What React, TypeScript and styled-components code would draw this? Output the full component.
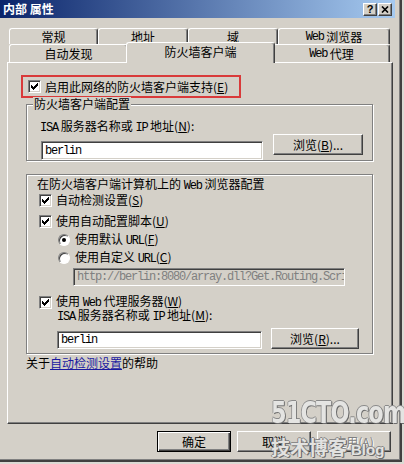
import styled, { createGlobalStyle, css } from 'styled-components'

const GlobalStyle = createGlobalStyle`
  html, body {
    margin: 0;
    padding: 0;
    background: #dcdad4;
  }
  body {
    font-family: "Noto Sans CJK SC", "Liberation Sans", sans-serif;
    font-size: 12px;
    color: #000;
  }
`

const FACE = '#d4d0c8'

const Screen = styled.div`
  width: 404px;
  height: 464px;
  position: relative;
  overflow: hidden;
`

const Window = styled.div`
  width: 402px;
  height: 462px;
  box-sizing: border-box;
  background: ${FACE};
  border-right: 2px solid #404040;
  border-bottom: 2px solid #404040;
  box-shadow: inset -1px -1px 0 #808080;
  display: flex;
  flex-direction: column;
`

const TitleBar = styled.div`
  width: 395px;
  height: 18px;
  flex-shrink: 0;
  display: flex;
  align-items: center;
  justify-content: space-between;
  padding-left: 3px;
  box-sizing: border-box;
  background: linear-gradient(to right, #0a246a, #a6caf0);
`

const TitleText = styled.span`
  color: #fff;
  font-weight: bold;
  font-size: 12px;
  line-height: 14px;
`

const CaptionButtons = styled.div`
  display: flex;
  gap: 1px;
  margin-right: 3px;
`

const CaptionButton = styled.div`
  width: 14px;
  height: 13px;
  box-sizing: border-box;
  background: ${FACE};
  border: 1px solid;
  border-color: #fff #404040 #404040 #fff;
  box-shadow: inset -1px -1px 0 #808080;
  display: flex;
  align-items: center;
  justify-content: center;
  font-family: "Liberation Sans", sans-serif;
  font-weight: bold;
  font-size: 11px;
  line-height: 11px;
`

const TabStrip = styled.div`
  margin-top: 10px;
  display: flex;
  flex-direction: column;
`

const TabRow = styled.div<{ $height: number }>`
  display: flex;
  height: ${(p) => p.$height}px;
  padding-left: 9px;
`

const Tab = styled.div<{ $width: number; $selected?: boolean }>`
  width: ${(p) => p.$width}px;
  box-sizing: border-box;
  display: flex;
  align-items: center;
  justify-content: center;
  background: ${FACE};
  border-top: 1px solid #fff;
  border-left: 1px solid #fff;
  border-right: 1px solid #404040;
  border-radius: 3px 3px 0 0;
  box-shadow: inset -1px 0 0 #808080;
  line-height: 14px;
  white-space: nowrap;
  ${(p) =>
    p.$selected &&
    css`
      position: relative;
      z-index: 1;
      margin: -2px -2px -1px;
      padding-bottom: 3px;
    `}
`

const Mono = styled.span`
  font-family: "Liberation Mono", monospace;
  font-size: 12px;
  letter-spacing: -1.2px;
`

const Key = styled.span`
  text-decoration: underline;
`

const Panel = styled.div`
  margin-left: 7px;
  width: 386px;
  height: 362px;
  box-sizing: border-box;
  border-top: 1px solid #fff;
  border-left: 1px solid #fff;
  border-right: 1px solid #404040;
  border-bottom: 1px solid #404040;
  box-shadow: inset -1px -1px 0 #808080;
  display: flex;
  flex-direction: column;
`

const Highlight = styled.div`
  margin: 12px 0 0 13px;
  width: 220px;
  height: 23px;
  box-sizing: border-box;
  border: 2px solid #d93a3a;
  display: flex;
  align-items: center;
  padding-left: 5px;
`

const Row = styled.div<{ $top?: number; $left?: number }>`
  display: flex;
  align-items: center;
  gap: 4px;
  height: 14px;
  line-height: 14px;
  white-space: nowrap;
  margin-top: ${(p) => p.$top ?? 0}px;
  margin-left: ${(p) => p.$left ?? 0}px;
`

const sunken = css`
  border: 1px solid;
  border-color: #808080 #fff #fff #808080;
  box-shadow: inset 1px 1px 0 #404040, inset -1px -1px 0 ${FACE};
`

const CheckBox = styled.span`
  width: 13px;
  height: 13px;
  box-sizing: border-box;
  flex-shrink: 0;
  background: #fff;
  ${sunken}
  display: flex;
  align-items: center;
  justify-content: center;
`

const Radio = styled.span<{ $on?: boolean }>`
  width: 12px;
  height: 12px;
  box-sizing: border-box;
  flex-shrink: 0;
  border-radius: 50%;
  background: #fff;
  border: 1px solid;
  border-color: #808080 #fff #fff #808080;
  box-shadow: inset 1px 1px 0 #404040;
  display: flex;
  align-items: center;
  justify-content: center;
  &::after {
    content: '';
    width: 4px;
    height: 4px;
    border-radius: 50%;
    background: ${(p) => (p.$on ? '#000' : 'transparent')};
  }
`

const Group = styled.div<{ $top: number; $height: number }>`
  margin: ${(p) => p.$top}px 0 0 18px;
  width: 347px;
  height: ${(p) => p.$height}px;
  box-sizing: border-box;
  border: 1px solid #808080;
  box-shadow: inset 1px 1px 0 #fff, 1px 1px 0 #fff;
  display: flex;
  flex-direction: column;
  padding-left: 12px;
`

const Legend = styled.span`
  align-self: flex-start;
  margin: -8px 0 0 -6px;
  padding: 0 1px;
  background: ${FACE};
  line-height: 14px;
`

const Caption = styled.div<{ $top?: number; $left?: number }>`
  line-height: 14px;
  white-space: nowrap;
  margin-top: ${(p) => p.$top ?? 0}px;
  margin-left: ${(p) => p.$left ?? 0}px;
`

const FieldRow = styled.div<{ $top: number; $left?: number }>`
  display: flex;
  align-items: flex-start;
  margin-top: ${(p) => p.$top}px;
  margin-left: ${(p) => p.$left ?? 0}px;
`

const TextInput = styled.div<{ $width: number; $height: number; $top?: number; $disabled?: boolean }>`
  width: ${(p) => p.$width}px;
  height: ${(p) => p.$height}px;
  margin-top: ${(p) => p.$top ?? 0}px;
  box-sizing: border-box;
  background: ${(p) => (p.$disabled ? FACE : '#fff')};
  color: ${(p) => (p.$disabled ? '#808080' : '#000')};
  ${sunken}
  padding-left: 3px;
  display: flex;
  align-items: center;
  overflow: hidden;
  white-space: nowrap;
  font-family: "Liberation Mono", monospace;
  font-size: 12px;
  letter-spacing: -1.2px;
`

const Button = styled.div<{ $width: number; $height?: number; $default?: boolean; $disabled?: boolean }>`
  width: ${(p) => p.$width}px;
  height: ${(p) => p.$height ?? 21}px;
  box-sizing: border-box;
  background: ${FACE};
  display: flex;
  align-items: center;
  justify-content: center;
  line-height: 14px;
  white-space: nowrap;
  color: ${(p) => (p.$disabled ? '#808080' : '#000')};
  text-shadow: ${(p) => (p.$disabled ? '1px 1px 0 #fff' : 'none')};
  ${(p) =>
    p.$default
      ? css`
          border: 1px solid #000;
          box-shadow: inset 1px 1px 0 #fff, inset -1px -1px 0 #404040, inset -2px -2px 0 #808080;
        `
      : css`
          border: 1px solid;
          border-color: #fff #404040 #404040 #fff;
          box-shadow: inset -1px -1px 0 #808080;
        `}
`

const HelpLine = styled.div`
  margin: 2px 0 0 18px;
  line-height: 14px;
`

const Link = styled.span`
  color: #1a1aa0;
  text-decoration: underline;
`

const Footer = styled.div`
  display: flex;
  gap: 6px;
  margin: 7px 0 0 157px;
`

const Watermark = styled.div`
  position: absolute;
  left: 271px;
  top: 398px;
  width: 128px;
  display: flex;
  flex-direction: column;
  pointer-events: none;
  color: rgba(238, 238, 236, 0.92);
  text-shadow: 1px 1px 0 #6e6e6e, -1px 0 0 #8a8a8a, 0 -1px 0 #8a8a8a, 1px 0 0 #7a7a7a;
`

const WatermarkBrand = styled.span`
  font-family: "DejaVu Sans Condensed", "DejaVu Sans", sans-serif;
  font-weight: bold;
  font-size: 30px;
  line-height: 30px;
  letter-spacing: -1px;
  white-space: nowrap;
  transform: scaleX(0.83);
  transform-origin: left center;
`

const WatermarkSub = styled.div`
  display: flex;
  align-items: baseline;
  gap: 4px;
  margin-top: 9px;
  line-height: 20px;
`

const WatermarkCjk = styled.span`
  font-weight: bold;
  font-size: 19px;
`

const WatermarkBlog = styled.span`
  font-family: "Liberation Sans", sans-serif;
  font-weight: bold;
  font-size: 15px;
`

const Check = () => (
  <svg width="7" height="7" viewBox="0 0 7 7" shapeRendering="crispEdges">
    <path d="M6 0h1v1h-1zM5 1h2v1h-2zM0 2h1v1h-1zM4 2h3v1h-3zM0 3h2v1h-2zM3 3h3v1h-3zM0 4h5v1h-5zM1 5h3v1h-3zM2 6h1v1h-1z" fill="#000" />
  </svg>
)

const CloseGlyph = () => (
  <svg width="8" height="7" viewBox="0 0 8 7">
    <path d="M1 0.5 L7 6.5 M7 0.5 L1 6.5" stroke="#000" strokeWidth="1.6" />
  </svg>
)

export default function App() {
  return (
    <Screen>
      <GlobalStyle />
      <Window>
        <TitleBar>
          <TitleText>内部 属性</TitleText>
          <CaptionButtons>
            <CaptionButton>?</CaptionButton>
            <CaptionButton>
              <CloseGlyph />
            </CaptionButton>
          </CaptionButtons>
        </TitleBar>

        <TabStrip>
          <TabRow $height={16}>
            <Tab $width={89}>常规</Tab>
            <Tab $width={90}>地址</Tab>
            <Tab $width={90}>域</Tab>
            <Tab $width={112}>
              <Mono>Web</Mono>&nbsp;浏览器
            </Tab>
          </TabRow>
          <TabRow $height={18}>
            <Tab $width={119}>自动发现</Tab>
            <Tab $width={149} $selected>防火墙客户端</Tab>
            <Tab $width={117}>
              <Mono>Web</Mono>&nbsp;代理
            </Tab>
          </TabRow>
        </TabStrip>

        <Panel>
          <Highlight>
            <Row>
              <CheckBox>
                <Check />
              </CheckBox>
              <span>
                启用此网络的防火墙客户端支持(<Key>E</Key>)
              </span>
            </Row>
          </Highlight>

          <Group $top={6} $height={57}>
            <Legend>防火墙客户端配置</Legend>
            <Caption $top={8} $left={1}>
              <Mono>ISA</Mono> 服务器名称或 <Mono>IP</Mono> 地址(<Key>N</Key>):
            </Caption>
            <FieldRow $top={-1} $left={2}>
              <TextInput $width={222} $height={19} $top={7}>
                berlin
              </TextInput>
              <Button $width={90} style={{ marginLeft: 10 }}>
                浏览(<Key>B</Key>)...
              </Button>
            </FieldRow>
          </Group>

          <Group $top={13} $height={180}>
            <Caption $top={2} $left={-2}>
              在防火墙客户端计算机上的 <Mono>Web</Mono> 浏览器配置
            </Caption>
            <Row>
              <CheckBox>
                <Check />
              </CheckBox>
              <span>
                自动检测设置(<Key>S</Key>)
              </span>
            </Row>
            <Row $top={7}>
              <CheckBox>
                <Check />
              </CheckBox>
              <span>
                使用自动配置脚本(<Key>U</Key>)
              </span>
            </Row>
            <Row $top={5} $left={19} style={{ gap: 5 }}>
              <Radio $on />
              <span>
                使用默认 <Mono>URL</Mono>(<Key>F</Key>)
              </span>
            </Row>
            <Row $top={4} $left={19} style={{ gap: 5 }}>
              <Radio />
              <span>
                使用自定义 <Mono>URL</Mono>(<Key>C</Key>)
              </span>
            </Row>
            <FieldRow $top={3} $left={34}>
              <TextInput $width={272} $height={18} $disabled>
                http://berlin:8080/array.dll?Get.Routing.Script
              </TextInput>
            </FieldRow>
            <Row $top={9}>
              <CheckBox>
                <Check />
              </CheckBox>
              <span>
                使用 <Mono>Web</Mono> 代理服务器(<Key>W</Key>)
              </span>
            </Row>
            <Caption $top={-1} $left={18}>
              <Mono>ISA</Mono> 服务器名称或 <Mono>IP</Mono> 地址(<Key>M</Key>):
            </Caption>
            <FieldRow $top={4} $left={18}>
              <TextInput $width={205} $height={18} $top={3}>
                berlin
              </TextInput>
              <Button $width={88} style={{ marginLeft: 9 }}>
                浏览(<Key>R</Key>)...
              </Button>
            </FieldRow>
          </Group>

          <HelpLine>
            关于<Link>自动检测设置</Link>的帮助
          </HelpLine>
        </Panel>

        <Footer>
          <Button $width={74} $default>
            确定
          </Button>
          <Button $width={74}>取消</Button>
          <Button $width={74} $disabled>
            应用(<Key>A</Key>)
          </Button>
        </Footer>
      </Window>

      <Watermark>
        <WatermarkBrand>51CTO.com</WatermarkBrand>
        <WatermarkSub>
          <WatermarkCjk>技术博客</WatermarkCjk>
          <WatermarkBlog>Blog</WatermarkBlog>
        </WatermarkSub>
      </Watermark>
    </Screen>
  )
}
